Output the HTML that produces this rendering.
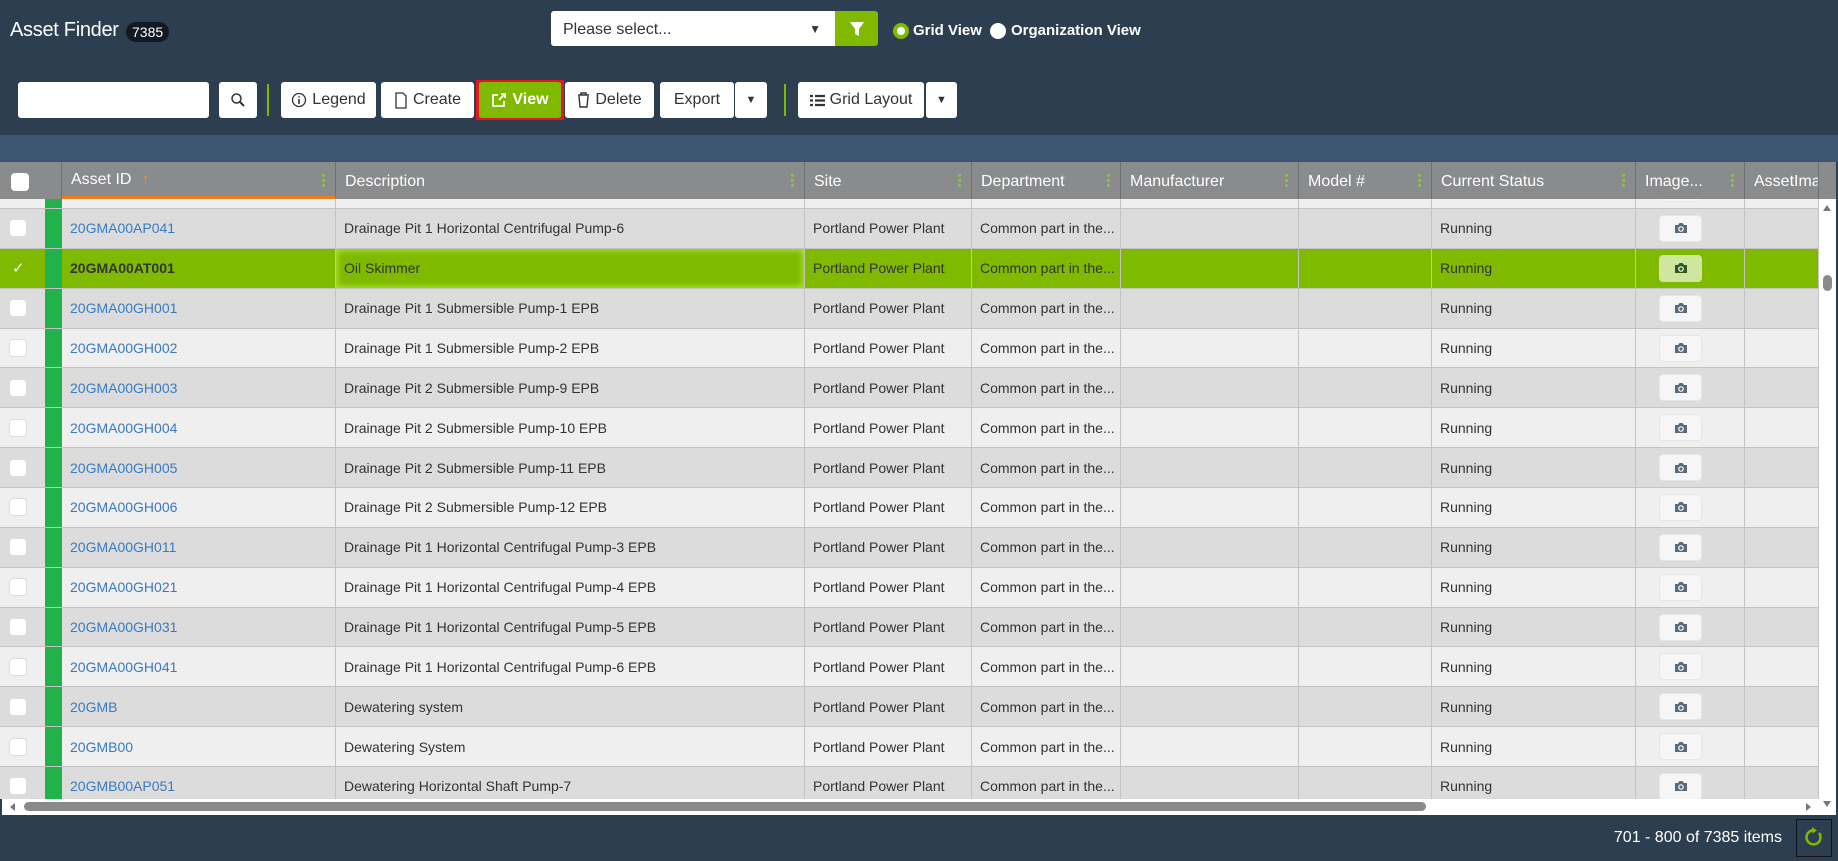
<!DOCTYPE html>
<html><head><meta charset="utf-8">
<style>
*{box-sizing:border-box;margin:0;padding:0}
body{width:1838px;height:860px;background:#2c3e50;font-family:"Liberation Sans",Arial,sans-serif;position:relative;overflow:hidden}
.abs{position:absolute}
.btn{position:absolute;top:82px;height:36px;background:#fff;border-radius:3px;color:#333;font-size:16px;display:flex;align-items:center;justify-content:center;gap:5px}
.sep{position:absolute;top:84px;width:2px;height:32px;background:#7fba00}
.hdr{position:absolute;top:162px;height:37px;background:#8a8b8d;color:#fff;font-size:16px;border-right:1px solid #6f7072;display:flex;align-items:center;padding-left:9px;padding-top:2px}
.dots{position:absolute;right:10px;top:11px;width:3px;height:15px;background:radial-gradient(circle,#8bc34a 1.4px,transparent 1.6px) 0 0/3px 5px}
.row{position:absolute;left:0;width:1819px;height:39.86px;border-bottom:1px solid #c3c3c3;font-size:14px;color:#333}
.c{position:absolute;top:0;height:100%;border-right:1px solid #c3c3c3;display:flex;align-items:center;padding-left:8px;white-space:nowrap;overflow:hidden}
.id{color:#3a7bc0}
.cb{width:18px;height:18px;background:#fff;border-radius:4px;border:1px solid #ddd}
.cam{width:43px;height:27px;background:#f6f6f6;border:1px solid #e6e6e6;border-radius:4px;margin-left:23px;display:flex;align-items:center;justify-content:center}
</style></head><body>
<div class="abs" style="left:10px;top:19px;color:#fff;font-size:20px;letter-spacing:-0.3px">Asset Finder</div>
<div class="abs" style="left:126px;top:22px;background:#111a22;color:#fff;font-size:14px;border-radius:10px;padding:2px 6px">7385</div>
<div class="abs" style="left:551px;top:11px;width:284px;height:35px;background:#fff;border-radius:3px 0 0 3px;font-size:16px;color:#333;padding:10px 12px 0">Please select...<span style="position:absolute;right:14px;top:11px;font-size:12px">▼</span></div>
<div class="abs" style="left:835px;top:11px;width:43px;height:35px;background:#7fba00;border-radius:0 3px 3px 0"><svg width="43" height="35"><path d="M15 11h14l-5 7v7l-4-2v-5z" fill="#fff"/></svg></div>
<div class="abs" style="left:893px;top:23px;width:16px;height:16px;border-radius:50%;background:#fff;border:4px solid #7fba00"></div>
<div class="abs" style="left:913px;top:22px;color:#fff;font-size:15px;font-weight:bold">Grid View</div>
<div class="abs" style="left:990px;top:23px;width:16px;height:16px;border-radius:50%;background:#fff"></div>
<div class="abs" style="left:1011px;top:22px;color:#fff;font-size:15px;font-weight:bold">Organization View</div>

<div class="abs" style="left:18px;top:82px;width:191px;height:36px;background:#fff;border-radius:3px"></div>
<div class="btn" style="left:219px;width:38px"><svg width="16" height="16"><circle cx="6.5" cy="6.5" r="4.5" fill="none" stroke="#333" stroke-width="1.5"/><path d="M10 10l4 4" stroke="#333" stroke-width="2"/></svg></div>
<div class="sep" style="left:267px"></div>
<div class="btn" style="left:281px;width:95px"><svg width="16" height="16"><circle cx="8" cy="8" r="6.5" fill="none" stroke="#333" stroke-width="1.3"/><path d="M8 7v5M8 4.3v1.2" stroke="#333" stroke-width="1.6"/></svg>Legend</div>
<div class="btn" style="left:381px;width:93px"><svg width="14" height="17"><path d="M2 1h7l3 3v12H2z" fill="none" stroke="#333" stroke-width="1.3"/></svg>Create</div>
<div class="abs" style="left:476px;top:80px;width:88px;height:40px;border:3px solid #e4161e;background:#7fba00"></div>
<div class="btn" style="left:479px;width:82px;background:#7fba00;color:#fff;font-weight:bold"><svg width="16" height="16"><path d="M7 3H2v11h11V9" fill="none" stroke="#fff" stroke-width="1.8"/><path d="M8 8l6-6M10 2h4v4" fill="none" stroke="#fff" stroke-width="1.8"/></svg>View</div>
<div class="btn" style="left:565px;width:89px"><svg width="13" height="16"><path d="M1 3h11M4 3V1h5v2M2 4l1 11h7l1-11" fill="none" stroke="#333" stroke-width="1.4"/></svg>Delete</div>
<div class="btn" style="left:660px;width:74px">Export</div>
<div class="btn" style="left:735px;width:32px;font-size:11px">▼</div>
<div class="sep" style="left:784px"></div>
<div class="btn" style="left:798px;width:126px"><svg width="15" height="13"><path d="M0 2h3M5 2h10M0 6.5h3M5 6.5h10M0 11h3M5 11h10" stroke="#333" stroke-width="2.2"/></svg>Grid Layout</div>
<div class="btn" style="left:926px;width:31px;font-size:11px">▼</div>

<div class="abs" style="left:0;top:135px;width:1838px;height:682px;background:#fff;border:2px solid #2c3e50;border-top:0"></div>
<div class="abs" style="left:0;top:135px;width:1838px;height:27px;background:#3d5570"></div>

<div class="hdr" style="left:0;width:62px;padding-left:11px"><div class="cb" style="border:0"></div></div>
<div class="hdr" style="left:62px;width:274px;border-bottom:3px solid #e67e22">Asset ID <span style="color:#f08a3c;margin-left:10px">↑</span><div class="dots"></div></div>
<div class="hdr" style="left:336px;width:469px">Description<div class="dots"></div></div>
<div class="hdr" style="left:805px;width:167px">Site<div class="dots"></div></div>
<div class="hdr" style="left:972px;width:149px">Department<div class="dots"></div></div>
<div class="hdr" style="left:1121px;width:178px">Manufacturer<div class="dots"></div></div>
<div class="hdr" style="left:1299px;width:133px">Model #<div class="dots"></div></div>
<div class="hdr" style="left:1432px;width:204px">Current Status<div class="dots"></div></div>
<div class="hdr" style="left:1636px;width:109px">Image...<div class="dots"></div></div>
<div class="hdr" style="left:1745px;width:74px;overflow:hidden;white-space:nowrap">AssetImage</div>
<div class="abs" style="left:1819px;top:162px;width:17px;height:37px;background:#8a8b8d"></div>

<div class="abs" style="left:0;top:199px;width:1819px;height:600px;overflow:hidden">
<div id="rows" class="abs" style="left:0;top:-29.86px;width:1819px"></div>
</div>
<div class="abs" style="left:1819px;top:199px;width:17px;height:600px;background:#fff"><div style="position:absolute;left:4px;top:6px;border:4px solid transparent;border-bottom:6px solid #777;border-top:0"></div><div style="position:absolute;left:4px;top:76px;width:9px;height:16px;border-radius:5px;background:#8a8a8a"></div><div style="position:absolute;left:4px;bottom:-8px;border:4px solid transparent;border-top:6px solid #777;border-bottom:0"></div></div>
<div class="abs" style="left:2px;top:799px;width:1817px;height:15px;background:#fff"><div style="position:absolute;left:8px;top:4px;border:4px solid transparent;border-right:5px solid #777;border-left:0"></div><div style="position:absolute;left:22px;top:3px;width:1402px;height:9px;border-radius:5px;background:#8a8a8a"></div><div style="position:absolute;right:8px;top:4px;border:4px solid transparent;border-left:5px solid #777;border-right:0"></div></div>

<div class="abs" style="left:1580px;top:829px;width:202px;text-align:right;color:#fff;font-size:16px">701 - 800 of 7385 items</div>
<div class="abs" style="left:1796px;top:819px;width:36px;height:38px;border:1px solid #111"><svg width="34" height="36"><path d="M22 13a7 7 0 1 1-4-2.5" fill="none" stroke="#7fba00" stroke-width="2.5"/><path d="M15 7l5 3.5-4.5 3z" fill="#7fba00"/></svg></div>

<script>
var d=[["20GMA00AP041","Drainage Pit 1 Horizontal Centrifugal Pump-5"],["20GMA00AP041","Drainage Pit 1 Horizontal Centrifugal Pump-6"],["20GMA00AT001","Oil Skimmer"],["20GMA00GH001","Drainage Pit 1 Submersible Pump-1 EPB"],["20GMA00GH002","Drainage Pit 1 Submersible Pump-2 EPB"],["20GMA00GH003","Drainage Pit 2 Submersible Pump-9 EPB"],["20GMA00GH004","Drainage Pit 2 Submersible Pump-10 EPB"],["20GMA00GH005","Drainage Pit 2 Submersible Pump-11 EPB"],["20GMA00GH006","Drainage Pit 2 Submersible Pump-12 EPB"],["20GMA00GH011","Drainage Pit 1 Horizontal Centrifugal Pump-3 EPB"],["20GMA00GH021","Drainage Pit 1 Horizontal Centrifugal Pump-4 EPB"],["20GMA00GH031","Drainage Pit 1 Horizontal Centrifugal Pump-5 EPB"],["20GMA00GH041","Drainage Pit 1 Horizontal Centrifugal Pump-6 EPB"],["20GMB","Dewatering system"],["20GMB00","Dewatering System"],["20GMB00AP051","Dewatering Horizontal Shaft Pump-7"]];
var cols=[[0,45],[45,17],[62,274],[336,469],[805,167],[972,149],[1121,178],[1299,133],[1432,204],[1636,109],[1745,74]];
var h="";
d.forEach(function(r,i){
 var sel=i==2,bg=sel?"#7fba00":(i%2?"#dcdcdc":"#efefef");
 var cam='<div class="cam" style="'+(sel?'background:#cfe6a0;border-color:#cfe6a0':'')+'"><svg width="14" height="12"><path d="M1 3h3l1.5-2h3L10 3h3v8H1z" fill="'+(sel?'#2f5a1a':'#5a6a7a')+'"/><circle cx="7" cy="7" r="2.2" fill="none" stroke="#fff" stroke-width="1.2"/></svg></div>';
 var v=[sel?'<span style="color:#fff;font-size:15px;margin-left:3px">✓</span>':'<div class="cb"></div>','',r[0],r[1],"Portland Power Plant","Common part in the...","","","Running",cam,""];
 h+='<div class="row" style="top:'+(i*39.86)+'px;background:'+bg+'">';
 cols.forEach(function(c,j){
  var st='left:'+c[0]+'px;width:'+c[1]+'px;';
  if(j==1)st+='background:#21b24b;border-right:0;padding:0;';
  if(j==0)st+='padding-left:9px;border-right:0;';
  if(j==9)st+='padding-left:0;';
  if(j==2)st+=sel?'font-weight:bold;color:#333;':'';
  if(j==3&&sel)st+='box-shadow:inset 0 0 6px 2px #a8e02a;';
  h+='<div class="c'+(j==2&&!sel?' id':'')+'" style="'+st+'">'+v[j]+'</div>';
 });
 h+='</div>';
});
document.getElementById('rows').innerHTML=h;
</script>
</body></html>
